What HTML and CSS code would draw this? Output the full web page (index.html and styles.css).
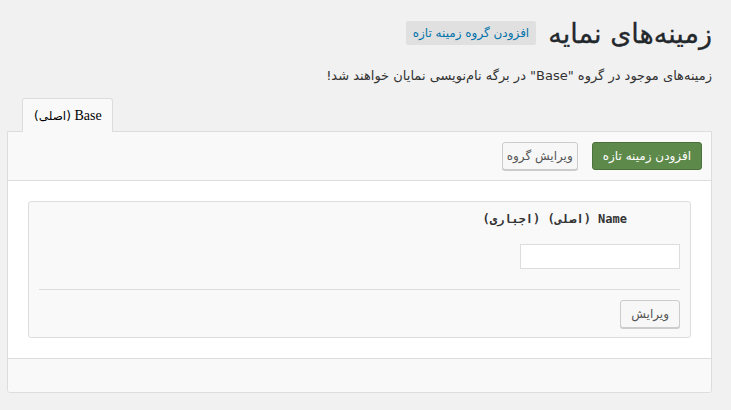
FILE: index.html
```html
<!DOCTYPE html>
<html lang="fa" dir="rtl">
<head>
  <meta charset="UTF-8">
  <title>زمینه‌های نمایه</title>
  <link rel="stylesheet" href="styles.css">
</head>
<body>
  <div class="wrap">
    <div class="head">
      <h1>زمینه‌های نمایه</h1>
      <a class="add-group" href="#">افزودن گروه زمینه تازه</a>
    </div>
    <p class="desc">زمینه‌های موجود در گروه "Base" در برگه نام‌نویسی نمایان خواهند شد!</p>

    <div class="tabs">
      <div class="tab">Base <span class="tab-note">(اصلی)</span></div>
    </div>
    <div class="panel">
      <div class="toolbar">
        <button class="btn btn-green">افزودن زمینه تازه</button>
        <button class="btn btn-light">ویرایش گروه</button>
      </div>
      <div class="fields">
        <div class="field">
          <div class="label">Name (اصلی) (اجباری)</div>
          <input class="text" type="text">
          <div class="line"></div>
          <button class="btn btn-edit">ویرایش</button>
        </div>
      </div>
      <div class="footer"></div>
    </div>
  </div>
</body>
</html>
```

FILE: styles.css
```css
* { margin: 0; padding: 0; box-sizing: border-box; }
body { background: #f1f1f1; font-family: "DejaVu Sans", sans-serif; font-size: 12px; color: #333; }
.wrap { margin: 0 19px 0 7px; }
.head { display: flex; align-items: center; gap: 12px; padding-top: 19px; height: 49px; }
.head h1 { font-size: 27px; font-weight: normal; color: #23282d; line-height: 30px; -webkit-text-stroke: 0.3px #23282d; }
.add-group { display: block; background: #e0e0e0; color: #0073aa; text-decoration: none; font-size: 12px; height: 24px; line-height: 24px; padding: 0 7px; border-radius: 2px; margin-top: -2px; }
.desc { margin-top: 19px; line-height: 16px; font-size: 13px; }
.tabs { display: flex; justify-content: flex-end; margin-top: 14px; padding-left: 15px; }
.tab { font-family: "Liberation Serif", serif; font-size: 14px; color: #000; background: #f9f9f9; border: 1px solid #ddd; border-bottom: none; border-radius: 3px 3px 0 0; height: 34px; line-height: 34px; padding: 0 10px 0 11px; margin-bottom: -1px; position: relative; }
.tab-note { font-family: "DejaVu Sans", sans-serif; font-size: 12px; }
.panel { border: 1px solid #ddd; border-radius: 0 0 3px 3px; background: #fff; }
.toolbar { background: #f9f9f9; border-bottom: 1px solid #ddd; height: 49px; display: flex; gap: 14px; padding: 10px 9px 0; }
.btn { font-family: "DejaVu Sans", sans-serif; font-size: 12px; color: #555; background: #f7f7f7; border: 1px solid #ccc; border-radius: 3px; height: 28px; padding: 0 10px; box-shadow: 0 1px 0 #ccc; }
.btn-green { background: #5d8a4a; border-color: #4b723b; color: #fff; box-shadow: none; }
.btn-light { padding: 0 4px; }
.fields { padding: 20px; }
.field { background: #f9f9f9; border: 1px solid #ddd; border-radius: 3px; padding: 9px 10px; display: flex; flex-direction: column; align-items: flex-start; height: 137px; }
.label { font-family: "DejaVu Sans Mono", "DejaVu Sans", monospace; font-weight: bold; font-size: 12px; color: #333; padding-right: 53px; line-height: 16px; }
.text { width: 160px; height: 26px; border: 1px solid #ddd; background: #fff; margin-top: 17px; }
.line { align-self: stretch; border-top: 1px solid #ddd; margin-top: 20px; }
.btn-edit { margin-top: 10px; height: 29px; padding: 0 10px; }
.footer { background: #f9f9f9; border-top: 1px solid #ddd; height: 34px; border-radius: 0 0 3px 3px; }
```
